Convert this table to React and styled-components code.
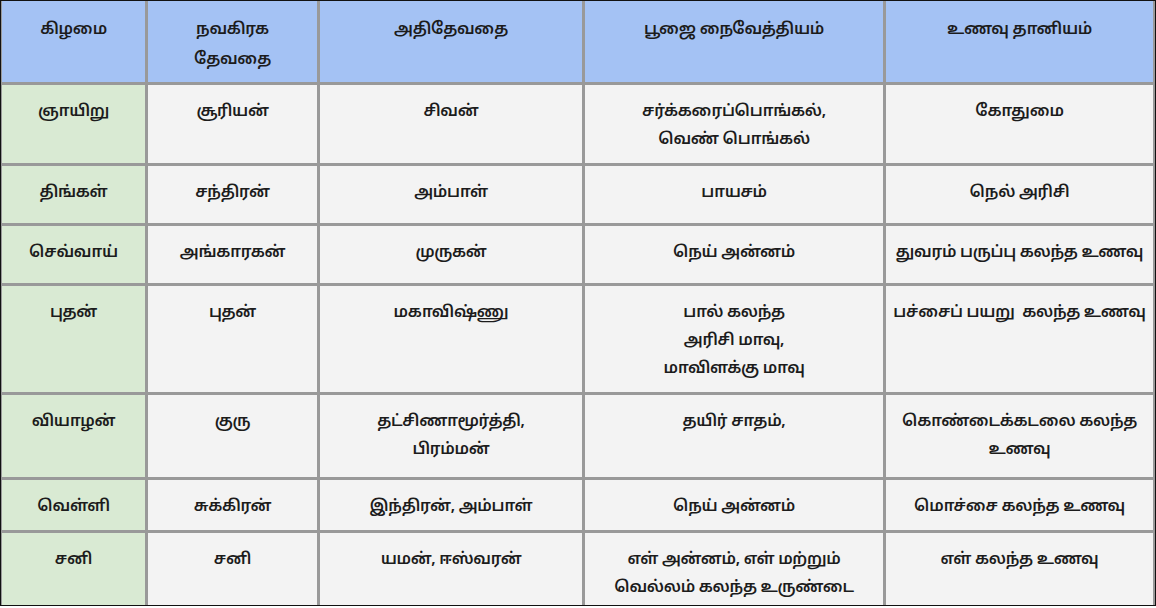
import React from "react";
import styled, { createGlobalStyle } from "styled-components";

const Global = createGlobalStyle`
  html, body { margin: 0; padding: 0; background: #ffffff; }
  body { font-family: "Noto Sans Tamil", "Noto Sans", "Liberation Sans", sans-serif; }
`;

const Frame = styled.div`
  box-sizing: border-box;
  width: 1156px;
  height: 606px;
  border: 1px solid #111;
  background: #999999;
  padding: 0 2px 0 1px;
  display: grid;
  grid-template-columns: 143px 169px 262px 298px 267px;
  grid-template-rows: 81px 78px 57px 57px 106px 82px 50px 72px;
  column-gap: 3px;
  row-gap: 3px;
  color: #1c1c1c;
`;

const HeadCell = styled.div`
  background: #a4c2f4;
  text-align: center;
  font-size: 16px;
  font-weight: 600;
  letter-spacing: -0.3px;
  line-height: 30px;
  padding-top: 14px;
`;

const Cell = styled.div`
  background: ${(p) => (p.$day ? "#d9ead3" : "#f3f3f3")};
  text-align: center;
  font-size: 16px;
  font-weight: 600;
  letter-spacing: -0.3px;
  line-height: 28px;
  padding-top: 13px;
`;

const Line = styled.div`
  white-space: pre-wrap;
`;

const headers = [
  ["கிழமை"],
  ["நவகிரக", "தேவதை"],
  ["அதிதேவதை"],
  ["பூஜை நைவேத்தியம்"],
  ["உணவு தானியம்"],
];

const rows = [
  [["ஞாயிறு"], ["சூரியன்"], ["சிவன்"], ["சர்க்கரைப்பொங்கல்,", "வெண் பொங்கல்"], ["கோதுமை"]],
  [["திங்கள்"], ["சந்திரன்"], ["அம்பாள்"], ["பாயசம்"], ["நெல் அரிசி"]],
  [["செவ்வாய்"], ["அங்காரகன்"], ["முருகன்"], ["நெய் அன்னம்"], ["துவரம் பருப்பு கலந்த உணவு"]],
  [["புதன்"], ["புதன்"], ["மகாவிஷ்ணு"], ["பால் கலந்த", "அரிசி மாவு,", "மாவிளக்கு மாவு"], ["பச்சைப் பயறு  கலந்த உணவு"]],
  [["வியாழன்"], ["குரு"], ["தட்சிணாமூர்த்தி,", "பிரம்மன்"], ["தயிர் சாதம்,"], ["கொண்டைக்கடலை கலந்த", "உணவு"]],
  [["வெள்ளி"], ["சுக்கிரன்"], ["இந்திரன், அம்பாள்"], ["நெய் அன்னம்"], ["மொச்சை கலந்த உணவு"]],
  [["சனி"], ["சனி"], ["யமன், ஈஸ்வரன்"], ["எள் அன்னம், எள் மற்றும்", "வெல்லம் கலந்த உருண்டை"], ["எள் கலந்த உணவு"]],
];

export default function App() {
  return (
    <>
      <Global />
      <Frame>
        {headers.map((h, i) => (
          <HeadCell key={`h${i}`}>
            {h.map((l, j) => (
              <Line key={j}>{l}</Line>
            ))}
          </HeadCell>
        ))}
        {rows.map((r, ri) =>
          r.map((c, ci) => (
            <Cell key={`${ri}-${ci}`} $day={ci === 0}>
              {c.map((l, j) => (
                <Line key={j}>{l}</Line>
              ))}
            </Cell>
          ))
        )}
      </Frame>
    </>
  );
}
